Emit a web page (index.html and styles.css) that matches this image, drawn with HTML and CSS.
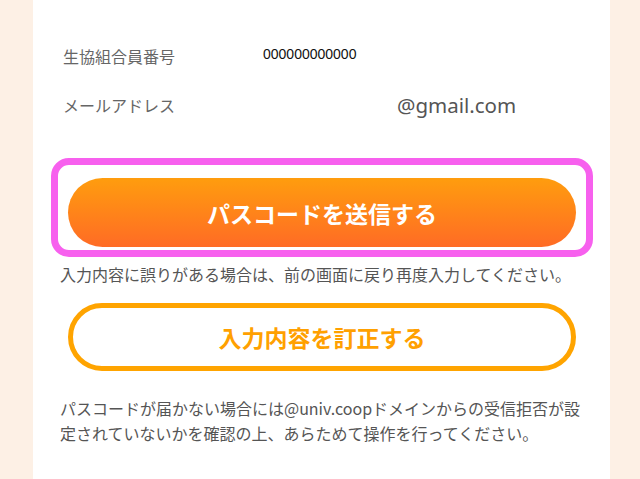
FILE: index.html
```html
<!DOCTYPE html>
<html lang="ja">
<head>
    <meta charset="UTF-8">
    <meta name="viewport" content="width=device-width, initial-scale=1.0">
    <title>パスコード送信</title>
    <link rel="stylesheet" href="styles.css">
</head>
<body>
    <div class="panel">
        <div class="info-row">
            <span class="info-label">生協組合員番号</span>
            <span class="info-value number">000000000000</span>
        </div>
        <div class="info-row">
            <span class="info-label">メールアドレス</span>
            <span class="info-value mail">@gmail.com</span>
        </div>

        <div class="highlight">
            <button type="button" class="btn-send">パスコードを送信する</button>
        </div>
        <p class="note">入力内容に誤りがある場合は、前の画面に戻り再度入力してください。</p>

        <button type="button" class="btn-fix">入力内容を訂正する</button>

        <p class="note notice">パスコードが届かない場合には@univ.coopドメインからの受信拒否が設<br>定されていないかを確認の上、あらためて操作を行ってください。</p>
    </div>
</body>
</html>
```

FILE: styles.css
```css
body {
    margin: 0;
    background-color: #fdf0e5;
    font-family: "Noto Sans CJK JP", "Noto Sans", sans-serif;
}
.panel {
    margin-left: 33px;
    width: 577px;
    min-height: 479px;
    box-sizing: border-box;
    padding: 44px 27px 0;
    background: #fff;
}
.info-row {
    display: flex;
    align-items: center;
    height: 24px;
    margin-bottom: 25px;
    padding-left: 3px;
}
.info-label {
    width: 200px;
    font-size: 16px;
    color: #666;
}
.info-value.number {
    font-family: "Liberation Sans", Arial, sans-serif;
    font-size: 14px;
    color: #111;
    margin-top: -4px;
}
.info-value.mail {
    font-family: "Noto Sans", sans-serif;
    font-size: 20.5px;
    color: #555;
    margin-left: 134px;
}
.highlight {
    margin: 41px -10px 0 -9px;
    padding: 13px 10px 3px 10px;
    border: 7px solid #f760ee;
    border-radius: 18px;
}
.btn-send, .btn-fix {
    display: block;
    width: 100%;
    font-family: "Noto Sans CJK JP", sans-serif;
    font-size: 23px;
    font-weight: bold;
    cursor: pointer;
}
.btn-send {
    height: 69px;
    border: none;
    border-radius: 35px;
    color: #fff;
    background: linear-gradient(#ff9d0e, #ff6b25);
}
.btn-fix {
    width: 508px;
    margin: 17px 0 0 8px;
    height: 68px;
    border: 5px solid #ffa400;
    border-radius: 34px;
    color: #ffa000;
    background: #fff;
}
.note {
    margin: 5px 0 0;
    font-size: 16px;
    line-height: 24px;
    color: #555;
    white-space: nowrap;
}
.notice {
    margin-top: 25px;
    line-height: 25px;
}
```
